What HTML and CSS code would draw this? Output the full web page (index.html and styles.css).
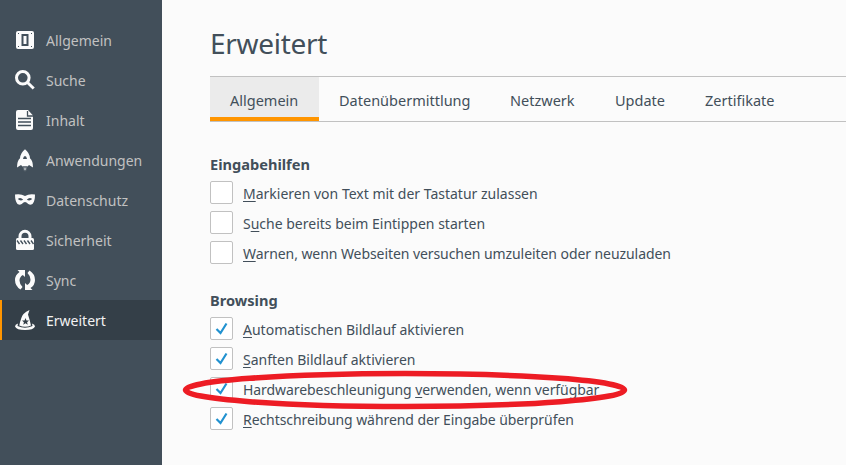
FILE: index.html
```html
<!DOCTYPE html>
<html lang="de">
<head>
  <meta charset="UTF-8" />
  <meta name="viewport" content="width=device-width, initial-scale=1.0" />
  <title>Einstellungen</title>
  <link rel="stylesheet" href="styles.css">
</head>
<body>
  <nav class="sidebar">
    <a class="category">
      <svg class="icon" viewBox="0 0 20 20"><rect x="1" y="1" width="18" height="18" rx="2"/><rect class="line slot" x="7.500" y="5" width="5" height="10"/><path class="cut" d="M3 3h1v1H3zM16 3h1v1h-1zM3 16h1v1H3zM16 16h1v1h-1z"/></svg>
      <span>Allgemein</span>
    </a>
    <a class="category">
      <svg class="icon" viewBox="0 0 20 20"><circle class="stroke" cx="7.8" cy="7.8" r="6.3"/><path class="stroke" d="M12.500 12.500l6.200 6"/></svg>
      <span>Suche</span>
    </a>
    <a class="category">
      <svg class="icon" viewBox="0 0 20 20"><path d="M3 0h10l5 5.500V18q0 2-2 2H3q-2 0-2-2V2q0-2 2-2z"/><path class="line" d="M12.500 1v5H18M3 8.500h13M3 12h13M3 15.500h13"/></svg>
      <span>Inhalt</span>
    </a>
    <a class="category">
      <svg class="icon" viewBox="0 0 20 20"><path d="M10-.8q4.500 3.500 5 9 3 2.500 3 9.300l-4-2.500-1.500 1.500h-5L6 15 2 17.500q0-6.800 3-9.300 .5-5.500 5-9z"/><path class="cut" d="M10 6q1.500 0 2 3H8q.5-3 2-3z"/><path class="flame" d="M7.700 17h4.600Q12 20 10 21.500 8 20 7.700 17z"/></svg>
      <span>Anwendungen</span>
    </a>
    <a class="category">
      <svg class="icon" viewBox="0 0 20 20"><path d="M0 4.500Q6 3.500 10 6q4-2.500 10-1.500 0 7-2.500 9.500-3.500 1.800-6-1.500-1.500-1.200-3 0-2.500 3.300-6 1.500Q0 11.500 0 4.500z"/><path class="cut" d="M2.800 9q2.700-2.500 5.400.8-3 1.700-5.400-.8zM17.200 9q-2.700-2.500-5.400.8 3 1.700 5.400-.8z"/></svg>
      <span>Datenschutz</span>
    </a>
    <a class="category">
      <svg class="icon" viewBox="0 0 20 20"><path class="stroke" d="M5 9V6.300a5 5 0 0 1 10 0V9"/><rect x="1" y="8" width="18" height="12" rx="1.500"/><path class="line" d="M2 10.500l2.500 3.500M5.500 10.500L8 14M9 10.500l2.500 3.500M12.500 10.500L15 14M16 10.500l2.500 3.500"/></svg>
      <span>Sicherheit</span>
    </a>
    <a class="category">
      <svg class="icon" viewBox="0 0 20 20"><path d="M2.500 0H10v7L7.800 5Q4.500 7 4.500 10.500q0 3.500 3 6.500l-2 2.500Q0 16 0 10q0-5 4.500-8zM17.500 20H10v-7l2.200 2q3.300-2 3.300-5.500 0-3.500-3-6.500l2-2.500Q20 4 20 10q0 5-4.500 8z"/></svg>
      <span>Sync</span>
    </a>
    <a class="category selected">
      <svg class="icon" viewBox="0 0 20 20"><path d="M4.300 15.500Q6 7 8.500 4 11 1.500 14.500 0L13 4.500q1.500 4.500 3 11-6 2.700-11.700 0z"/><path d="M3 13.500q-3 1-3 3Q1.500 20 10 20t10-3.500q0-2-3-3l.5 2.500q-7.500 3.300-15 0z"/><path class="cut" d="M10.500 8l1 2.400 2.500.2-1.900 1.600.6 2.500-2.200-1.400-2.200 1.400.6-2.500L7 10.600l2.500-.2z"/></svg>
      <span>Erweitert</span>
    </a>
  </nav>

  <main class="content">
    <h1>Erweitert</h1>
    <div class="tabs">
      <a class="tab active t1"><span>Allgemein</span></a>
      <a class="tab t2"><span>Datenübermittlung</span></a>
      <a class="tab t3"><span>Netzwerk</span></a>
      <a class="tab t4"><span>Update</span></a>
      <a class="tab t5"><span>Zertifikate</span></a>
    </div>

    <section class="group">
      <h2>Eingabehilfen</h2>
      <div class="option"><span class="check"></span><span><u>M</u>arkieren von Text mit der Tastatur zulassen</span></div>
      <div class="option"><span class="check"></span><span>S<u>u</u>che bereits beim Eintippen starten</span></div>
      <div class="option long"><span class="check"></span><span><u>W</u>arnen, wenn Webseiten versuchen umzuleiten oder neuzuladen</span></div>
    </section>

    <section class="group">
      <h2>Browsing</h2>
      <div class="option"><span class="check"><svg viewBox="0 0 21 21"><path d="M5.500 11l4 4L15.500 5.500"/></svg></span><span><u>A</u>utomatischen Bildlauf aktivieren</span></div>
      <div class="option"><span class="check"><svg viewBox="0 0 21 21"><path d="M5.500 11l4 4L15.500 5.500"/></svg></span><span><u>S</u>anften Bildlauf aktivieren</span></div>
      <div class="option long marked">
        <span class="check"><svg viewBox="0 0 21 21"><path d="M5.500 11l4 4L15.500 5.500"/></svg></span><span>Hardwarebeschleunigung <u>v</u>erwenden, wenn verfügbar</span>
        <svg class="marker" viewBox="0 0 446 40"><ellipse cx="223" cy="20" rx="219.500" ry="16.500"/></svg>
      </div>
      <div class="option long"><span class="check"><svg viewBox="0 0 21 21"><path d="M5.500 11l4 4L15.500 5.500"/></svg></span><span><u>R</u>echtschreibung während der Eingabe überprüfen</span></div>
    </section>
  </main>
</body>
</html>
```
FILE: styles.css
```css
:root {
  --sidebar: #424f5a;
  --selected: #343f48;
  --accent: #ff9500;
  --text: #424f5a;
  --line: #c1c1c1;
}
* {
  margin: 0;
  padding: 0;
  box-sizing: border-box;
}
body {
  height: 100vh;
  display: flex;
  overflow: hidden;
  background: #fbfbfb;
  color: var(--text);
  font-family: 'Noto Sans', sans-serif;
  font-size: 14px;
}
.sidebar {
  width: 162px;
  flex-shrink: 0;
  padding-top: 20px;
  background: var(--sidebar);
}
.category {
  height: 40px;
  padding-left: 15px;
  display: flex;
  align-items: center;
  gap: 11px;
  color: #c1c1c1;
  --cut: var(--sidebar);
}
.category.selected {
  padding-left: 13px;
  border-left: 2px solid var(--accent);
  background: var(--selected);
  color: #f2f2f2;
  --cut: var(--selected);
}
.icon {
  width: 20px;
  height: 20px;
  fill: #fbfbfb;
  overflow: visible;
}
.icon .cut {
  fill: var(--cut);
}
.icon .flame {
  fill: #a5abb0;
  stroke: var(--cut);
}
.icon .line {
  fill: none;
  stroke: var(--cut);
  stroke-width: 1.3;
}
.icon .slot {
  stroke-width: 2;
}
.icon .stroke {
  fill: none;
  stroke: #fbfbfb;
  stroke-width: 3;
}
.content {
  flex: 1;
  padding: 22px 0 0 48px;
}
h1 {
  height: 54px;
  font-size: 28px;
  font-weight: 400;
  line-height: 43px;
  letter-spacing: -0.3px;
}
.tabs {
  height: 46px;
  display: flex;
  border-top: 1px solid var(--line);
  border-bottom: 1px solid var(--line);
}
.tab {
  padding: 0 20px;
  font-size: 14.5px;
  line-height: 47px;
  white-space: nowrap;
}
.tab.active {
  background: #ebebeb;
  box-shadow: inset 0 -4px var(--accent);
}
.t1 { width: 109px; }
.t2 { width: 171px; }
.t3 { width: 105px; }
.t4 { width: 90px; }
.t5 { width: 110px; }
.group {
  padding-top: 33px;
}
.group + .group {
  padding-top: 23px;
}
h2 {
  height: 23px;
  font-size: 14.6px;
  font-weight: 700;
  line-height: 18px;
}
.option {
  height: 30px;
  display: flex;
  align-items: center;
  gap: 10px;
  white-space: nowrap;
}
.option.long {
  letter-spacing: -0.07px;
}
.option u {
  text-decoration: underline;
  text-underline-offset: 2px;
  text-decoration-thickness: 1px;
}
.check {
  width: 23px;
  height: 23px;
  margin-bottom: 2px;
  border: 1px solid var(--line);
  border-radius: 2px;
  background: #fff;
}
.check svg {
  display: block;
  width: 21px;
  height: 21px;
  fill: none;
  stroke: #2292d0;
  stroke-width: 2.2;
}
.marked {
  position: relative;
}
.marker {
  position: absolute;
  left: -28px;
  top: -4px;
  width: 446px;
  height: 40px;
  fill: none;
  stroke: #ed1c24;
  stroke-width: 5.5;
}
```
